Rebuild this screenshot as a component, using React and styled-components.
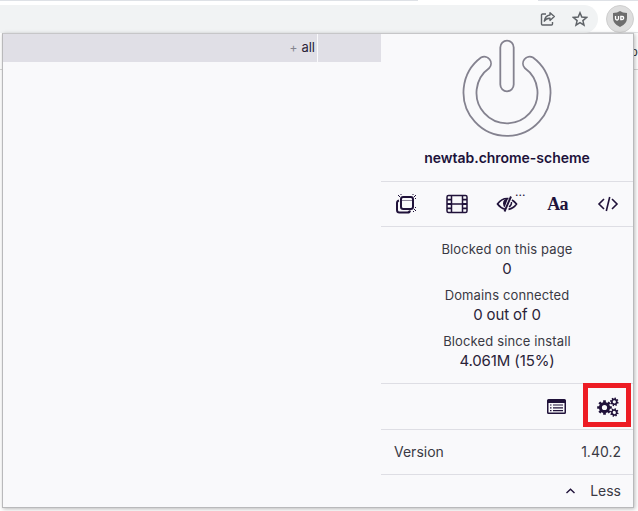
import React from "react";
import styled, { createGlobalStyle } from "styled-components";

const Global = createGlobalStyle`
  * { box-sizing: border-box; }
  body { margin: 0; background: #fff; overflow: hidden; font-family: Inter, sans-serif; color: #3a3944; }
  svg { display: block; flex: none; }
`;

const Browser = styled.div`
  position: relative;
  width: 638px;
  height: 511px;
  overflow: hidden;
  background: #fff;
`;

const TabStrip = styled.div`
  display: flex;
  justify-content: space-between;
  height: 1px;
`;

const StripPart = styled.div`
  width: ${(p) => p.$width}px;
  background: #dee1e6;
`;

const Toolbar = styled.div`
  display: flex;
  height: 31px;
  padding-top: 4px;
`;

const Omnibox = styled.div`
  width: 598px;
  height: 28px;
  display: flex;
  align-items: center;
  justify-content: flex-end;
  gap: 16px;
  padding-right: 10px;
  border-radius: 0 14px 14px 0;
  background: #f1f3f4;
`;

const ExtensionButton = styled.div`
  position: relative;
  z-index: 1;
  width: 28px;
  height: 28px;
  margin-left: 8px;
  display: grid;
  place-items: center;
  border-radius: 50%;
  border: 1px solid #cfcfcf;
  background: #dedede;
`;

const Page = styled.div`
  height: 38px;
  padding: 12px 0 0 631px;
  border-top: 1px solid #e3e4e6;
  border-bottom: 1px solid #d6d6d6;
  white-space: nowrap;
  font: 12px/14px "Liberation Sans", sans-serif;
  color: #333;
`;

const Popup = styled.div`
  position: absolute;
  z-index: 2;
  left: 2px;
  top: 33px;
  width: 632px;
  height: 475px;
  display: flex;
  border: 1px solid #b9b9bb;
  border-top-color: #c6c6c8;
  background: #f9f9fb;
  box-shadow: 1px 1px 4px rgba(0, 0, 0, 0.28);
`;

const Firewall = styled.div`
  width: 378px;
  flex: none;
`;

const FirewallRow = styled.div`
  display: grid;
  grid-template-columns: 314px 63px;
  gap: 1px;
  height: 28px;
`;

const FirewallCell = styled.div`
  padding-right: 2px;
  background: #e0dfe6;
  text-align: right;
  font-size: 13px;
  line-height: 27px;
  color: #2a2338;
`;

const Plus = styled.span`
  margin-right: 4px;
  color: #85848f;
  font-size: 12px;
`;

const Main = styled.div`
  width: 252px;
  display: flex;
  flex-direction: column;
`;

const PowerArea = styled.div`
  height: 113px;
  display: flex;
  justify-content: center;
  padding-top: 4px;
`;

const Hostname = styled.div`
  height: 34px;
  padding-top: 1px;
  text-align: center;
  font-size: 14px;
  line-height: 20px;
  font-weight: 600;
  letter-spacing: -0.03px;
  color: #20123a;
`;

const Switches = styled.div`
  height: 46px;
  display: grid;
  grid-template-columns: repeat(5, 1fr);
  place-items: center;
  border-top: 1px solid #dedee4;
  border-bottom: 1px solid #dedee4;
`;

const Switch = styled.div`
  position: relative;
  height: 22px;
  min-width: 22px;
  display: grid;
  place-items: center;
  color: #20123a;
  font: 700 18px/22px "Liberation Serif", serif;
  letter-spacing: -0.8px;
`;

const Badge = styled.span`
  position: absolute;
  left: 19px;
  top: -8px;
  font: 12px/13px Inter, sans-serif;
  letter-spacing: 0;
`;

const Stats = styled.div`
  height: 156px;
  padding-top: 13px;
  display: flex;
  flex-direction: column;
  gap: 7px;
  text-align: center;
`;

const Stat = styled.div`
  height: 39px;
`;

const StatLabel = styled.div`
  font-size: 13px;
  line-height: 19px;
  letter-spacing: 0.13px;
`;

const StatValue = styled.div`
  font-size: 15px;
  line-height: 20px;
  letter-spacing: -0.12px;
  color: #2a2338;
`;

const Tools = styled.div`
  height: 47px;
  display: flex;
  justify-content: flex-end;
  border-top: 1px solid #dedee4;
  border-bottom: 1px solid #dedee4;
`;

const Tool = styled.div`
  width: 51px;
  display: grid;
  place-items: center;
`;

const Highlight = styled.div`
  position: absolute;
  left: 580px;
  top: 349px;
  width: 48px;
  height: 44px;
  border: 5px solid #ed1c24;
`;

const Version = styled.div`
  height: 45px;
  padding: 0 12px 1px 13px;
  display: flex;
  align-items: center;
  justify-content: space-between;
  font-size: 14px;
  border-bottom: 1px solid #dedee4;
`;

const Less = styled.div`
  height: 32px;
  padding: 0 12px 1px;
  display: flex;
  align-items: center;
  justify-content: flex-end;
  gap: 14px;
  font-size: 14px;
`;

const ShareIcon = () => (
  <svg width="16" height="16" viewBox="0 0 16 16" fill="none" stroke="#5f6368" strokeWidth="1.4" strokeLinejoin="round">
    <path d="M6 3H2.5Q1.500 3 1.500 4v9q0 1 1 1h9q1 0 1-1v-2" />
    <path d="M10 1.700 14.300 5.600 10 9.400V7.300Q6.500 7 4.300 10.200 5 4.600 10 4z" />
  </svg>
);

const StarIcon = () => (
  <svg width="16" height="16" viewBox="0 0 16 16" fill="none" stroke="#5f6368" strokeWidth="1.5">
    <path d="m8 1.800 1.800 4.300 4.700.4-3.600 3.100 1.100 4.500L8 11.700l-4 2.400 1.100-4.500-3.600-3.100 4.700-.4z" />
  </svg>
);

const ShieldIcon = () => (
  <svg width="16" height="16" viewBox="0 0 16 16">
    <path d="M8 0Q10.500 2 15 2v5q0 6-7 9-7-3-7-9V2Q5.500 2 8 0z" fill="#6d6d6d" />
    <path d="M3.500 5v2.500a1.500 1.500 0 0 0 3 0V5M8.800 5.500v3h1.400a1.500 1.500 0 0 0 0-3z" fill="none" stroke="#fff" strokeWidth="1.300" />
  </svg>
);

const PowerIcon = () => (
  <svg width="92" height="100" viewBox="0 0 92 100" fill="none" stroke="#84828f" strokeWidth="1.800">
    <rect x="39.300" y="2.700" width="13.400" height="50.600" rx="6.700" />
    <path d="M20 19.500A43.500 43.500 0 1 0 72 19.500A6.800 6.800 0 0 0 63.700 30A30.500 30.500 0 1 1 28.300 30A6.800 6.800 0 0 0 20 19.500z" />
  </svg>
);

const PopupsIcon = () => (
  <svg width="22" height="22" viewBox="0 0 22 22" fill="none" stroke="#20123a" strokeWidth="2">
    <path d="M4 7.500Q2 8 2 10v7q0 2.500 2.500 2.500h8q2.200 0 2.500-2" />
    <rect x="6" y="4" width="12" height="12" rx="2.200" />
    <path d="M6 7.500h12" strokeWidth="1" opacity=".5" />
    <path d="M3 2l2 2M5.500 1.500h1M19 4l2-2M17.500 1.500h1M19 16l2 2M18 18.500h1M20 5.500h1M20 14.500h1" strokeWidth="1" />
  </svg>
);

const FilmIcon = () => (
  <svg width="22" height="20" viewBox="0 0 22 20" fill="none" stroke="#20123a" strokeWidth="1.500">
    <rect x="1" y="1.500" width="20" height="17" rx="1.500" />
    <path d="M5.500 1.500v17M16.500 1.500v17M5.500 10h11" />
    <path d="M1 5.700h4.500M1 10h4.500M1 14.300h4.500M16.500 5.700H21M16.500 10H21M16.500 14.300H21" strokeWidth="1.800" />
  </svg>
);

const EyeSlashIcon = () => (
  <svg width="22" height="18" viewBox="0 0 22 18" fill="none" stroke="#20123a" strokeWidth="1.700">
    <path d="M9 14.200Q4.500 13 1.500 9 5.500 3.500 11 3.500h1.500M16 5q2.500 1.500 4.500 4-3 4.500-8 5.300" />
    <path d="M12 3.500Q7 4 7 8.500q0 2 1.500 4z" fill="#20123a" stroke="none" />
    <path d="M15 1.500 8.500 16.500" strokeWidth="1.900" />
    <path d="M15.500 7q.5 3-2.500 5" strokeWidth="1.300" />
  </svg>
);

const CodeIcon = () => (
  <svg width="22" height="16" viewBox="0 0 22 16" fill="none" stroke="#20123a" strokeWidth="1.600">
    <path d="M7 3 2 8l5 5M15 3l5 5-5 5M12.700 1 9.300 15" />
  </svg>
);

const LoggerIcon = () => (
  <svg width="19" height="15" viewBox="0 0 19 15">
    <path fillRule="evenodd" fill="#20123a" d="M1.500 0h16Q19 0 19 1.500v12q0 1.500-1.500 1.500h-16Q0 15 0 13.500v-12Q0 0 1.500 0zM1.500 4v9.500h16V4z" />
    <path d="M3 6h1.500M6 6h10M3 8.800h1.500M6 8.800h10M3 11.600h1.500M6 11.600h10" stroke="#20123a" strokeWidth="1.200" />
  </svg>
);

const teeth = [0, 45, 90, 135];

const Gear = ({ x, y, ring, width, reach, tooth, turn = 0 }) => (
  <g transform={`translate(${x} ${y}) rotate(${turn})`} fill="none" stroke="#20123a">
    <circle r={ring} strokeWidth={width} />
    {teeth.map((angle) => (
      <path
        key={angle}
        transform={`rotate(${angle})`}
        d={`M0 ${-reach}V${-ring}M0 ${ring}V${reach}`}
        strokeWidth={tooth}
      />
    ))}
  </g>
);

const GearsIcon = () => (
  <svg width="22" height="20" viewBox="0 0 22 20">
    <Gear x={7.5} y={10.5} ring={4.1} width={3} reach={7.3} tooth={2.7} />
    <Gear x={17.3} y={4.8} ring={2.4} width={1.6} reach={4.3} tooth={1.5} turn={15} />
    <Gear x={17.3} y={15.5} ring={2.4} width={1.6} reach={4.3} tooth={1.5} turn={15} />
  </svg>
);

const ChevronIcon = () => (
  <svg width="11" height="7" viewBox="0 0 11 7" fill="none" stroke="#20123a" strokeWidth="1.400">
    <path d="M1.500 6 5.500 2.200l4 3.800" />
  </svg>
);

const stats = [
  ["Blocked on this page", "0"],
  ["Domains connected", "0 out of 0"],
  ["Blocked since install", "4.061M (15%)"],
];

export default function App() {
  return (
    <Browser>
      <Global />
      <TabStrip>
        <StripPart $width={418} />
        <StripPart $width={100} />
      </TabStrip>
      <Toolbar>
        <Omnibox>
          <ShareIcon />
          <StarIcon />
        </Omnibox>
        <ExtensionButton><ShieldIcon /></ExtensionButton>
      </Toolbar>
      <Page>oc</Page>
      <Popup>
        <Firewall>
          <FirewallRow>
            <FirewallCell><Plus>+</Plus>all</FirewallCell>
            <FirewallCell />
          </FirewallRow>
        </Firewall>
        <Main>
          <PowerArea><PowerIcon /></PowerArea>
          <Hostname>newtab.chrome-scheme</Hostname>
          <Switches>
            <Switch><PopupsIcon /></Switch>
            <Switch><FilmIcon /></Switch>
            <Switch><EyeSlashIcon /><Badge>...</Badge></Switch>
            <Switch>Aa</Switch>
            <Switch><CodeIcon /></Switch>
          </Switches>
          <Stats>
            {stats.map(([label, value]) => (
              <Stat key={label}>
                <StatLabel>{label}</StatLabel>
                <StatValue>{value}</StatValue>
              </Stat>
            ))}
          </Stats>
          <Tools>
            <Tool><LoggerIcon /></Tool>
            <Tool><GearsIcon /></Tool>
          </Tools>
          <Version><span>Version</span><span>1.40.2</span></Version>
          <Less><ChevronIcon /><span>Less</span></Less>
        </Main>
        <Highlight />
      </Popup>
    </Browser>
  );
}
